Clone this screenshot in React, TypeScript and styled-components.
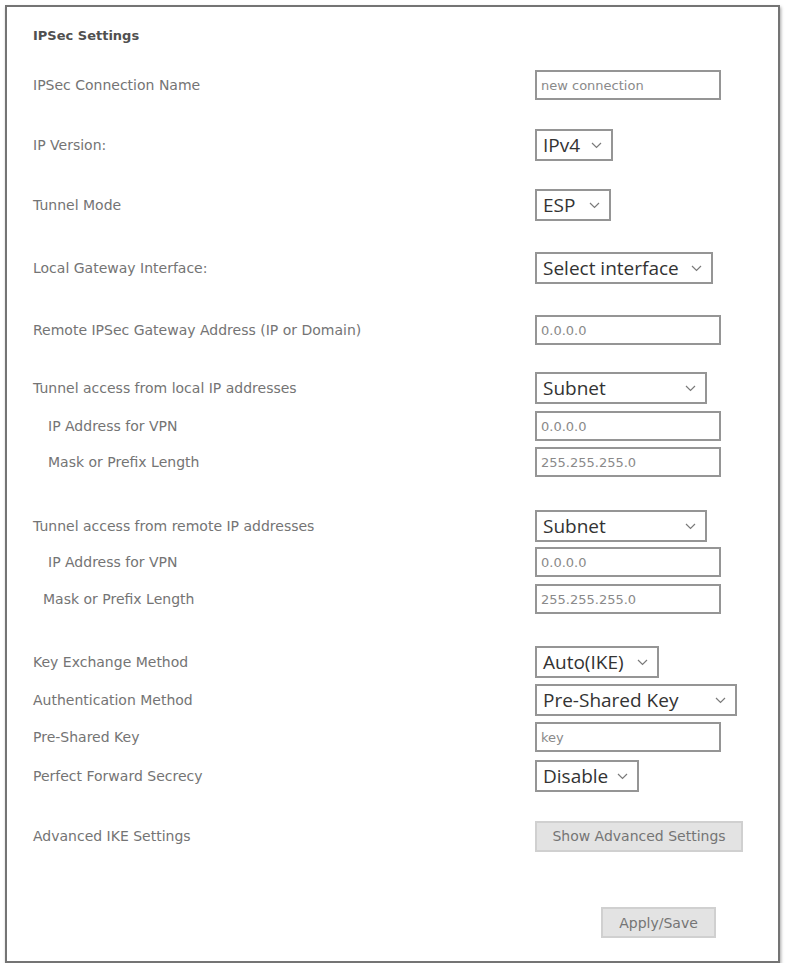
import React from 'react';
import styled, { createGlobalStyle } from 'styled-components';

const GlobalStyle = createGlobalStyle`
  html, body {
    margin: 0;
    padding: 0;
    background: #ffffff;
  }
`;

const Page = styled.div`
  padding: 5px 0 0 5px;
`;

const Panel = styled.div`
  box-sizing: border-box;
  width: 775px;
  height: 958px;
  border: 2px solid #747474;
  box-shadow: 1px 2px 3px rgba(0, 0, 0, 0.35);
  padding: 10px 0 0 26px;
  font-family: 'DejaVu Sans', Verdana, sans-serif;
`;

const Row = styled.div<{ $mt?: number }>`
  display: grid;
  grid-template-columns: 502px 1fr;
  align-items: center;
  height: 36px;
  margin-top: ${p => p.$mt ?? 0}px;
`;

const Title = styled.div`
  font-size: 13px;
  font-weight: bold;
  color: #505050;
`;

const Label = styled.div<{ $indent?: number }>`
  font-size: 14px;
  color: #747474;
  padding-left: ${p => p.$indent ?? 0}px;
  white-space: nowrap;
`;

const TextInput = styled.div`
  box-sizing: border-box;
  width: 186px;
  height: 30px;
  border: 2px solid #959595;
  padding-left: 4px;
  display: flex;
  align-items: center;
  font-size: 13px;
  color: #8a8a8a;
`;

const SelectBox = styled.div<{ $w: number }>`
  box-sizing: border-box;
  width: ${p => p.$w}px;
  height: 32px;
  border: 2px solid #959595;
  padding: 0 9px 0 6px;
  display: flex;
  align-items: center;
  justify-content: space-between;
  font-family: 'Open Sans', 'Noto Sans', sans-serif;
  font-size: 19px;
  color: #333333;
`;

const Button = styled.div<{ $w: number }>`
  box-sizing: border-box;
  width: ${p => p.$w}px;
  height: 31px;
  background: #e3e3e3;
  border: 2px solid #d0d0d0;
  display: flex;
  align-items: center;
  justify-content: center;
  font-size: 14px;
  color: #757575;
`;

const FooterRow = styled.div`
  display: flex;
  padding-left: 568px;
  margin-top: 53px;
`;

const Chevron = () => (
  <svg width="11" height="7" viewBox="0 0 11 7">
    <path d="M1 1 L5.5 5.5 L10 1" fill="none" stroke="#7a7a7a" strokeWidth="1.2" />
  </svg>
);

const Select: React.FC<{ value: string; width: number }> = ({ value, width }) => (
  <SelectBox $w={width}>
    <span>{value}</span>
    <Chevron />
  </SelectBox>
);

export default function App() {
  return (
    <Page>
      <GlobalStyle />
      <Panel>
        <Row>
          <Title>IPSec Settings</Title>
        </Row>
        <Row $mt={14}>
          <Label>IPSec Connection Name</Label>
          <TextInput>new connection</TextInput>
        </Row>
        <Row $mt={24}>
          <Label>IP Version:</Label>
          <Select value="IPv4" width={78} />
        </Row>
        <Row $mt={24}>
          <Label>Tunnel Mode</Label>
          <Select value="ESP" width={76} />
        </Row>
        <Row $mt={27}>
          <Label>Local Gateway Interface:</Label>
          <Select value="Select interface" width={178} />
        </Row>
        <Row $mt={26}>
          <Label>Remote IPSec Gateway Address (IP or Domain)</Label>
          <TextInput>0.0.0.0</TextInput>
        </Row>
        <Row $mt={22}>
          <Label>Tunnel access from local IP addresses</Label>
          <Select value="Subnet" width={172} />
        </Row>
        <Row $mt={2}>
          <Label $indent={15}>IP Address for VPN</Label>
          <TextInput>0.0.0.0</TextInput>
        </Row>
        <Row>
          <Label $indent={15}>Mask or Prefix Length</Label>
          <TextInput>255.255.255.0</TextInput>
        </Row>
        <Row $mt={28}>
          <Label>Tunnel access from remote IP addresses</Label>
          <Select value="Subnet" width={172} />
        </Row>
        <Row>
          <Label $indent={15}>IP Address for VPN</Label>
          <TextInput>0.0.0.0</TextInput>
        </Row>
        <Row $mt={1}>
          <Label $indent={10}>Mask or Prefix Length</Label>
          <TextInput>255.255.255.0</TextInput>
        </Row>
        <Row $mt={27}>
          <Label>Key Exchange Method</Label>
          <Select value="Auto(IKE)" width={124} />
        </Row>
        <Row $mt={2}>
          <Label>Authentication Method</Label>
          <Select value="Pre-Shared Key" width={202} />
        </Row>
        <Row $mt={1}>
          <Label>Pre-Shared Key</Label>
          <TextInput>key</TextInput>
        </Row>
        <Row $mt={3}>
          <Label>Perfect Forward Secrecy</Label>
          <Select value="Disable" width={104} />
        </Row>
        <Row $mt={24}>
          <Label>Advanced IKE Settings</Label>
          <Button $w={208}>Show Advanced Settings</Button>
        </Row>
        <FooterRow>
          <Button $w={115}>Apply/Save</Button>
        </FooterRow>
      </Panel>
    </Page>
  );
}
